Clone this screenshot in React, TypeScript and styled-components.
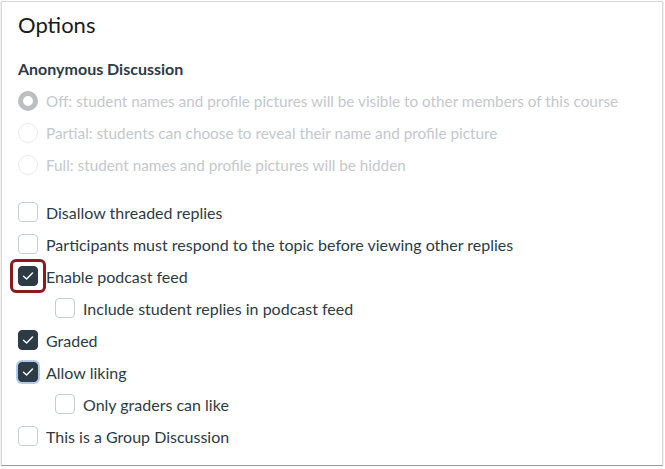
import { FunctionComponent } from "react";
import styled, { createGlobalStyle } from "styled-components";

const GlobalStyle = createGlobalStyle`
  html, body {
    margin: 0;
    padding: 0;
    background: #ffffff;
  }
  body {
    font-family: Lato, "Noto Sans", sans-serif;
    color: #2d3b45;
  }
`;

const Panel = styled.div`
  box-sizing: border-box;
  margin: 1px 0 0 1px;
  width: 662px;
  height: 465px;
  border: 1px solid #d6d8da;
  border-bottom-color: #9a9a9a;
  box-shadow: 0 1px 1px rgba(0, 0, 0, 0.35);
  padding: 9px 16px 0 16px;
  background: #ffffff;
`;

const Title = styled.h2`
  margin: 0;
  font-size: 22px;
  font-weight: 400;
  line-height: 28px;
  color: #1a1a1a;
`;

const SectionLabel = styled.div`
  margin-top: 20px;
  font-size: 16px;
  font-weight: 700;
  line-height: 20px;
  color: #2d3b45;
`;

const RadioGroup = styled.div`
  margin-top: 6px;
  display: flex;
  flex-direction: column;
`;

const Row = styled.label<{ $indent?: boolean }>`
  display: flex;
  align-items: center;
  gap: 8px;
  height: 32px;
  padding-left: ${(p) => (p.$indent ? "37px" : "0")};
  font-size: 16px;
  color: #2d3b45;
`;

const RadioRow = styled(Row)`
  font-size: 15.3px;
  color: #c4c8cc;
`;

const Radio = styled.span<{ $selected?: boolean }>`
  box-sizing: border-box;
  width: 20px;
  height: 20px;
  border-radius: 50%;
  flex-shrink: 0;
  border: ${(p) => (p.$selected ? "5px solid #bcbec0" : "1px solid #e8eaec")};
  background: #ffffff;
`;

const CheckList = styled.div`
  margin-top: 15px;
  display: flex;
  flex-direction: column;
`;

const FocusFrame = styled.span<{ $on?: boolean }>`
  display: flex;
  align-items: center;
  justify-content: center;
  flex-shrink: 0;
  width: 20px;
  height: 20px;
  position: relative;
  &::before {
    content: "";
    display: ${(p) => (p.$on ? "block" : "none")};
    position: absolute;
    left: -8px;
    top: -7px;
    right: -8px;
    bottom: -7px;
    border: 3px solid #8b1a1f;
    border-radius: 6px;
  }
`;

const Box = styled.span<{ $checked?: boolean; $focus?: boolean }>`
  box-sizing: border-box;
  width: 20px;
  height: 20px;
  border-radius: 4px;
  display: flex;
  align-items: center;
  justify-content: center;
  border: 1px solid ${(p) => (p.$checked ? "#2d3b45" : "#c7cdd1")};
  background: ${(p) => (p.$checked ? "#2d3b45" : "#ffffff")};
  box-shadow: ${(p) => (p.$focus ? "0 0 0 2px #aecbea" : "none")};
`;

const Tick = () => (
  <svg width="12" height="10" viewBox="0 0 12 10" fill="none">
    <path
      d="M1.5 5.2 L4.6 8 L10.5 2"
      stroke="#ffffff"
      strokeWidth="1.4"
      strokeLinecap="round"
      strokeLinejoin="round"
    />
  </svg>
);

type CheckProps = {
  label: string;
  checked?: boolean;
  indent?: boolean;
  focus?: boolean;
  highlight?: boolean;
};

const Check: FunctionComponent<CheckProps> = ({
  label,
  checked,
  indent,
  focus,
  highlight,
}) => (
  <Row $indent={indent}>
    <FocusFrame $on={highlight}>
      <Box $checked={checked} $focus={focus}>
        {checked && <Tick />}
      </Box>
    </FocusFrame>
    {label}
  </Row>
);

const radios = [
  "Off: student names and profile pictures will be visible to other members of this course",
  "Partial: students can choose to reveal their name and profile picture",
  "Full: student names and profile pictures will be hidden",
];

const App = () => {
  return (
    <>
      <GlobalStyle />
      <Panel>
        <Title>Options</Title>
        <SectionLabel>Anonymous Discussion</SectionLabel>
        <RadioGroup>
          {radios.map((r, i) => (
            <RadioRow key={r}>
              <Radio $selected={i === 0} />
              {r}
            </RadioRow>
          ))}
        </RadioGroup>
        <CheckList>
          <Check label="Disallow threaded replies" />
          <Check label="Participants must respond to the topic before viewing other replies" />
          <Check label="Enable podcast feed" checked highlight />
          <Check label="Include student replies in podcast feed" indent />
          <Check label="Graded" checked />
          <Check label="Allow liking" checked focus />
          <Check label="Only graders can like" indent />
          <Check label="This is a Group Discussion" />
        </CheckList>
      </Panel>
    </>
  );
};

export default App;
